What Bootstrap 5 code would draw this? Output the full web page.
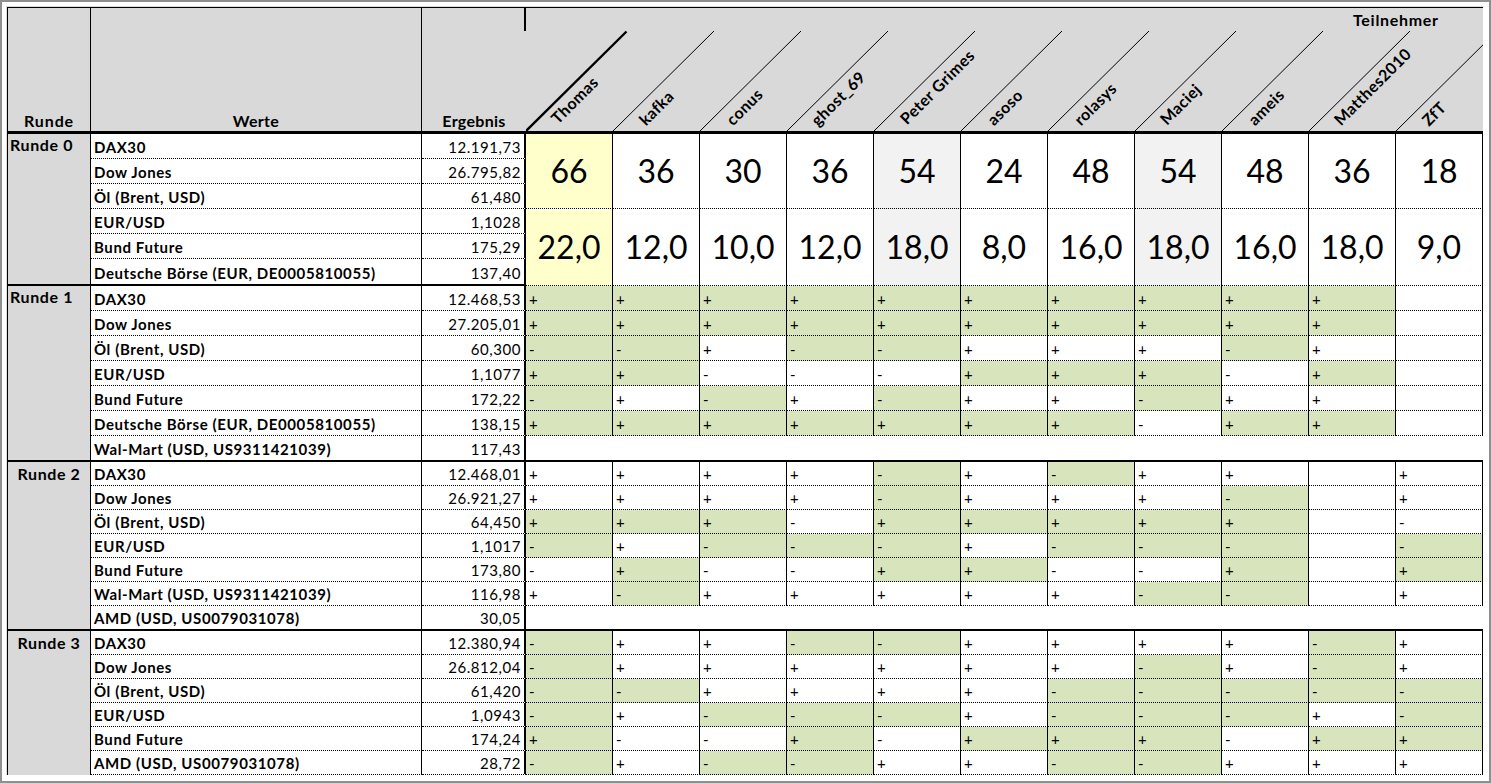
<!DOCTYPE html>
<html lang="de">
<head>
<meta charset="utf-8">
<title>Börsenspiel</title>
<link href="https://cdn.jsdelivr.net/npm/bootstrap@5.3.0/dist/css/bootstrap.min.css" rel="stylesheet">
<style>
html,body{margin:0;background:#fff;}
.frame{width:1491px;height:783px;border:2px solid #8f8f8f;padding:4px 0 0 4px;overflow:hidden;}
.sheet-wrap{width:1478px;border-top:1px solid #dcdcdc;border-left:1px solid #dcdcdc;}
.sheet{table-layout:fixed;width:1476px;border-collapse:separate;border-spacing:0;margin:0;
  font-family:Lato,"Liberation Sans",sans-serif;font-size:15px;letter-spacing:.55px;line-height:14px;color:#000;--bs-table-bg:transparent;--bs-table-color:#000;--bs-table-border-color:#000;}
.sheet th,.sheet td{padding:0 0 4px 0;color:#000;background-color:#fff;border:0;box-shadow:none;white-space:nowrap;overflow:hidden;}
.sheet thead th{background-color:#d9d9d9;height:127px;border-top:1px solid #000;border-bottom:3px solid #000;border-right:1px solid #000;padding-bottom:3px;font-weight:700;font-size:16px;letter-spacing:.3px;}
.sheet thead th.first{border-left:1px solid #000;letter-spacing:.9px;}
.sheet thead th.res{border-right:0;position:relative;overflow:visible;}
.sheet thead th.res::after{content:"";position:absolute;right:0;top:0;width:2px;height:23px;background:#000;}
.sheet thead th.diag{padding:0;border-right:0;}
.diag svg{display:block;}
.diag text{font-family:Lato,"Liberation Sans",sans-serif;font-size:16px;letter-spacing:.4px;font-weight:700;fill:#000;}
.diag text.ttl{letter-spacing:.7px;}
.diag line{stroke:#000;stroke-width:1;}
.diag line.lead{stroke-width:2.4;}
.sheet td{border-bottom:1px dotted #000;border-right:1px solid #000;vertical-align:bottom;}
.sheet td.rnd{background-color:#d9d9d9;border-left:1px solid #000;font-weight:700;font-size:16px;letter-spacing:.6px;vertical-align:top;padding:5px 0 0 0;border-bottom:2px solid #000;}
.sheet td.rnd.sp{padding:4px 0 0 2px;}
.sheet td.rnd.noln{border-bottom:0;}
.sheet td.nm{font-weight:700;padding-left:3px;letter-spacing:.6px;}
.sheet td.vl{padding-right:3px;border-right:2px solid #000;}
.sheet td.big{font-size:32px;line-height:32px;letter-spacing:0;text-align:center;vertical-align:middle;padding:0;}
.sheet td.pm{padding-left:3px;}
.sheet td.gn{background-color:#d8e4bc;}
.sheet td.yl{background-color:#ffffcc;}
.sheet td.lg{background-color:#f2f2f2;}
.sheet td.blank{border-right:0;}
.sheet tr.end>td{border-bottom:2px solid #000;}
.h24>td{height:24px;}
.h25>td{height:25px;}
.h26>td{height:26px;}
.h27>td{height:27px;}
</style>
</head>
<body>
<div class="frame">
<div class="sheet-wrap">
<table class="table sheet">
<colgroup>
<col style="width:84px"><col style="width:331px"><col style="width:104px">
<col span="11" style="width:87px">
</colgroup>
<thead>
<tr>
<th class="first text-center align-bottom">Runde</th>
<th class="text-center align-bottom">Werte</th>
<th class="res text-center align-bottom">Ergebnis</th>
<th class="diag" colspan="11">
<svg width="957" height="123" viewBox="0 0 957 123">
<line class="lead" x1="0" y1="123" x2="100.500" y2="23.500"/>
<line x1="87" y1="123" x2="188" y2="23"/>
<line x1="174" y1="123" x2="275" y2="23"/>
<line x1="261" y1="123" x2="362" y2="23"/>
<line x1="348" y1="123" x2="449" y2="23"/>
<line x1="435" y1="123" x2="536" y2="23"/>
<line x1="522" y1="123" x2="623" y2="23"/>
<line x1="609" y1="123" x2="710" y2="23"/>
<line x1="696" y1="123" x2="797" y2="23"/>
<line x1="783" y1="123" x2="884" y2="23"/>
<line x1="870" y1="123" x2="971" y2="23"/>
<text class="ttl" x="827" y="18">Teilnehmer</text>
<text transform="translate(32,117) rotate(-45)">Thomas</text>
<text transform="translate(120,118.500) rotate(-45)">kafka</text>
<text transform="translate(207,118.500) rotate(-45)">conus</text>
<text transform="translate(292,119) rotate(-45)">ghost_69</text>
<text transform="translate(381,117.500) rotate(-45)">Peter Grimes</text>
<text transform="translate(468,118.500) rotate(-45)">asoso</text>
<text transform="translate(555,118.500) rotate(-45)">rolasys</text>
<text transform="translate(641,118) rotate(-45)">Maciej</text>
<text transform="translate(729,118.500) rotate(-45)">ameis</text>
<text transform="translate(815,118.500) rotate(-45)">Matthes2010</text>
<text transform="translate(903,119) rotate(-45)">ZfT</text>
</svg>
</th>
</tr>
</thead>
<tbody>
<!-- Runde 0 -->
<tr class="h25">
<td class="rnd sp" rowspan="6">Runde 0</td><td class="nm">DAX30</td><td class="vl text-end">12.191,73</td>
<td class="big yl" rowspan="3">66</td><td class="big" rowspan="3">36</td><td class="big" rowspan="3">30</td><td class="big" rowspan="3">36</td><td class="big lg" rowspan="3">54</td><td class="big" rowspan="3">24</td><td class="big" rowspan="3">48</td><td class="big lg" rowspan="3">54</td><td class="big" rowspan="3">48</td><td class="big" rowspan="3">36</td><td class="big" rowspan="3">18</td>
</tr>
<tr class="h25"><td class="nm">Dow Jones</td><td class="vl text-end">26.795,82</td></tr>
<tr class="h25"><td class="nm">Öl (Brent, USD)</td><td class="vl text-end">61,480</td></tr>
<tr class="h25">
<td class="nm">EUR/USD</td><td class="vl text-end">1,1028</td>
<td class="big yl" rowspan="3">22,0</td><td class="big" rowspan="3">12,0</td><td class="big" rowspan="3">10,0</td><td class="big" rowspan="3">12,0</td><td class="big lg" rowspan="3">18,0</td><td class="big" rowspan="3">8,0</td><td class="big" rowspan="3">16,0</td><td class="big lg" rowspan="3">18,0</td><td class="big" rowspan="3">16,0</td><td class="big" rowspan="3">18,0</td><td class="big" rowspan="3">9,0</td>
</tr>
<tr class="h25"><td class="nm">Bund Future</td><td class="vl text-end">175,29</td></tr>
<tr class="h27 end"><td class="nm">Deutsche Börse (EUR, DE0005810055)</td><td class="vl text-end">137,40</td></tr>
<!-- Runde 1 -->
<tr class="h25"><td class="rnd sp" rowspan="7">Runde 1</td><td class="nm">DAX30</td><td class="vl text-end">12.468,53</td>
<td class="pm gn">+</td><td class="pm gn">+</td><td class="pm gn">+</td><td class="pm gn">+</td><td class="pm gn">+</td><td class="pm gn">+</td><td class="pm gn">+</td><td class="pm gn">+</td><td class="pm gn">+</td><td class="pm gn">+</td><td class="pm"></td></tr>
<tr class="h25"><td class="nm">Dow Jones</td><td class="vl text-end">27.205,01</td>
<td class="pm gn">+</td><td class="pm gn">+</td><td class="pm gn">+</td><td class="pm gn">+</td><td class="pm gn">+</td><td class="pm gn">+</td><td class="pm gn">+</td><td class="pm gn">+</td><td class="pm gn">+</td><td class="pm gn">+</td><td class="pm"></td></tr>
<tr class="h25"><td class="nm">Öl (Brent, USD)</td><td class="vl text-end">60,300</td>
<td class="pm gn">-</td><td class="pm gn">-</td><td class="pm">+</td><td class="pm gn">-</td><td class="pm gn">-</td><td class="pm">+</td><td class="pm">+</td><td class="pm">+</td><td class="pm gn">-</td><td class="pm">+</td><td class="pm"></td></tr>
<tr class="h25"><td class="nm">EUR/USD</td><td class="vl text-end">1,1077</td>
<td class="pm gn">+</td><td class="pm gn">+</td><td class="pm">-</td><td class="pm">-</td><td class="pm">-</td><td class="pm gn">+</td><td class="pm gn">+</td><td class="pm gn">+</td><td class="pm">-</td><td class="pm gn">+</td><td class="pm"></td></tr>
<tr class="h25"><td class="nm">Bund Future</td><td class="vl text-end">172,22</td>
<td class="pm gn">-</td><td class="pm">+</td><td class="pm gn">-</td><td class="pm">+</td><td class="pm gn">-</td><td class="pm">+</td><td class="pm">+</td><td class="pm gn">-</td><td class="pm">+</td><td class="pm">+</td><td class="pm"></td></tr>
<tr class="h25"><td class="nm">Deutsche Börse (EUR, DE0005810055)</td><td class="vl text-end">138,15</td>
<td class="pm gn">+</td><td class="pm gn">+</td><td class="pm gn">+</td><td class="pm gn">+</td><td class="pm gn">+</td><td class="pm gn">+</td><td class="pm gn">+</td><td class="pm">-</td><td class="pm gn">+</td><td class="pm gn">+</td><td class="pm"></td></tr>
<tr class="h26 end"><td class="nm">Wal-Mart (USD, US9311421039)</td><td class="vl text-end">117,43</td><td class="blank" colspan="11"></td></tr>
<!-- Runde 2 -->
<tr class="h24"><td class="rnd text-center" rowspan="7">Runde 2</td><td class="nm">DAX30</td><td class="vl text-end">12.468,01</td>
<td class="pm">+</td><td class="pm">+</td><td class="pm">+</td><td class="pm">+</td><td class="pm gn">-</td><td class="pm">+</td><td class="pm gn">-</td><td class="pm">+</td><td class="pm">+</td><td class="pm"></td><td class="pm">+</td></tr>
<tr class="h24"><td class="nm">Dow Jones</td><td class="vl text-end">26.921,27</td>
<td class="pm">+</td><td class="pm">+</td><td class="pm">+</td><td class="pm">+</td><td class="pm gn">-</td><td class="pm">+</td><td class="pm">+</td><td class="pm">+</td><td class="pm gn">-</td><td class="pm"></td><td class="pm">+</td></tr>
<tr class="h24"><td class="nm">Öl (Brent, USD)</td><td class="vl text-end">64,450</td>
<td class="pm gn">+</td><td class="pm gn">+</td><td class="pm gn">+</td><td class="pm">-</td><td class="pm gn">+</td><td class="pm gn">+</td><td class="pm gn">+</td><td class="pm gn">+</td><td class="pm gn">+</td><td class="pm"></td><td class="pm">-</td></tr>
<tr class="h24"><td class="nm">EUR/USD</td><td class="vl text-end">1,1017</td>
<td class="pm gn">-</td><td class="pm">+</td><td class="pm gn">-</td><td class="pm gn">-</td><td class="pm gn">-</td><td class="pm">+</td><td class="pm gn">-</td><td class="pm gn">-</td><td class="pm gn">-</td><td class="pm"></td><td class="pm gn">-</td></tr>
<tr class="h24"><td class="nm">Bund Future</td><td class="vl text-end">173,80</td>
<td class="pm">-</td><td class="pm gn">+</td><td class="pm">-</td><td class="pm">-</td><td class="pm gn">+</td><td class="pm gn">+</td><td class="pm">-</td><td class="pm">-</td><td class="pm gn">+</td><td class="pm"></td><td class="pm gn">+</td></tr>
<tr class="h24"><td class="nm">Wal-Mart (USD, US9311421039)</td><td class="vl text-end">116,98</td>
<td class="pm">+</td><td class="pm gn">-</td><td class="pm">+</td><td class="pm">+</td><td class="pm">+</td><td class="pm">+</td><td class="pm">+</td><td class="pm gn">-</td><td class="pm gn">-</td><td class="pm"></td><td class="pm">+</td></tr>
<tr class="h25 end"><td class="nm">AMD (USD, US0079031078)</td><td class="vl text-end">30,05</td><td class="blank" colspan="11"></td></tr>
<!-- Runde 3 -->
<tr class="h24"><td class="rnd noln text-center" rowspan="6">Runde 3</td><td class="nm">DAX30</td><td class="vl text-end">12.380,94</td>
<td class="pm gn">-</td><td class="pm">+</td><td class="pm">+</td><td class="pm gn">-</td><td class="pm gn">-</td><td class="pm">+</td><td class="pm">+</td><td class="pm">+</td><td class="pm">+</td><td class="pm gn">-</td><td class="pm">+</td></tr>
<tr class="h24"><td class="nm">Dow Jones</td><td class="vl text-end">26.812,04</td>
<td class="pm gn">-</td><td class="pm">+</td><td class="pm">+</td><td class="pm">+</td><td class="pm">+</td><td class="pm">+</td><td class="pm">+</td><td class="pm gn">-</td><td class="pm">+</td><td class="pm gn">-</td><td class="pm">+</td></tr>
<tr class="h24"><td class="nm">Öl (Brent, USD)</td><td class="vl text-end">61,420</td>
<td class="pm gn">-</td><td class="pm gn">-</td><td class="pm">+</td><td class="pm">+</td><td class="pm">+</td><td class="pm">+</td><td class="pm gn">-</td><td class="pm gn">-</td><td class="pm gn">-</td><td class="pm gn">-</td><td class="pm gn">-</td></tr>
<tr class="h24"><td class="nm">EUR/USD</td><td class="vl text-end">1,0943</td>
<td class="pm gn">-</td><td class="pm">+</td><td class="pm gn">-</td><td class="pm gn">-</td><td class="pm gn">-</td><td class="pm">+</td><td class="pm gn">-</td><td class="pm gn">-</td><td class="pm gn">-</td><td class="pm">+</td><td class="pm gn">-</td></tr>
<tr class="h24"><td class="nm">Bund Future</td><td class="vl text-end">174,24</td>
<td class="pm gn">+</td><td class="pm">-</td><td class="pm">-</td><td class="pm gn">+</td><td class="pm">-</td><td class="pm gn">+</td><td class="pm gn">+</td><td class="pm gn">+</td><td class="pm">-</td><td class="pm gn">+</td><td class="pm gn">+</td></tr>
<tr class="h24"><td class="nm">AMD (USD, US0079031078)</td><td class="vl text-end">28,72</td>
<td class="pm gn">-</td><td class="pm">+</td><td class="pm gn">-</td><td class="pm gn">-</td><td class="pm">+</td><td class="pm">+</td><td class="pm gn">-</td><td class="pm gn">-</td><td class="pm">+</td><td class="pm">+</td><td class="pm">+</td></tr>
</tbody>
</table>
</div>
</div>
<script src="https://cdn.jsdelivr.net/npm/bootstrap@5.3.0/dist/js/bootstrap.bundle.min.js"></script>
</body>
</html>
